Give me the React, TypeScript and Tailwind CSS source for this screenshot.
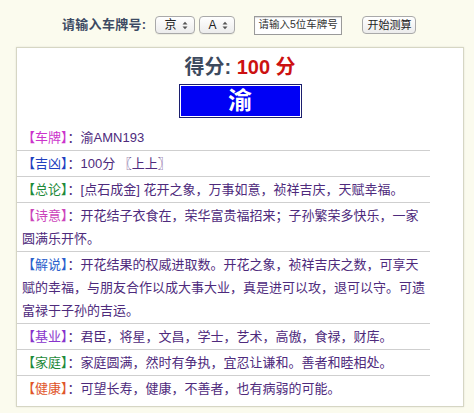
import React from 'react';

const ROWS = [
  { label: '车牌', color: 'text-[#cc33cc]', text: '渝AMN193' },
  { label: '吉凶', color: 'text-[#1f3fbf]', text: '100分 〖上上〗' },
  { label: '总论', color: 'text-[#1e8a3a]', text: '[点石成金] 花开之象，万事如意，祯祥吉庆，天赋幸福。' },
  { label: '诗意', color: 'text-[#cc44bb]', text: '开花结子衣食在，荣华富贵福招来；子孙繁荣多快乐，一家圆满乐开怀。' },
  {
    label: '解说',
    color: 'text-[#2a5fcc]',
    text: '开花结果的权威进取数。开花之象，祯祥吉庆之数，可享天赋的幸福，与朋友合作以成大事大业，真是进可以攻，退可以守。可遗富禄于子孙的吉运。',
  },
  { label: '基业', color: 'text-[#8833cc]', text: '君臣，将星，文昌，学士，艺术，高傲，食禄，财库。' },
  { label: '家庭', color: 'text-[#1e8a3a]', text: '家庭圆满，然时有争执，宜忍让谦和。善者和睦相处。' },
  { label: '健康', color: 'text-[#e0552a]', text: '可望长寿，健康，不善者，也有病弱的可能。' },
];

const Arrows = () => (
  <svg width="6" height="9" viewBox="0 0 6 9" className="text-[#555]">
    <path d="M0.5 3.5 L3 0.8 L5.5 3.5 Z M0.5 5.5 L3 8.2 L5.5 5.5 Z" fill="currentColor" />
  </svg>
);

const FakeSelect = ({ value, width }: { value: string; width: string }) => (
  <div
    className={`${width} h-[18px] flex items-center justify-between pl-[8px] pr-[6px] rounded-[4px] border border-[#a9a9a9] bg-gradient-to-b from-white to-[#ececec] text-[12px] text-[#222] shadow-[0_1px_0_rgba(0,0,0,0.05)]`}
  >
    <span>{value}</span>
    <Arrows />
  </div>
);

export default function App() {
  return (
    <div
      className="w-[474px] h-[413px] bg-[#fbfbee] overflow-hidden"
      style={{ fontFamily: '"Liberation Sans", "Noto Sans CJK SC", sans-serif' }}
    >
      {/* Top form */}
      <div className="h-[47px] flex items-center pl-[62px] pt-[3px]">
        <span className="text-[13px] font-bold text-[#3d4a63] tracking-[0.3px]">请输入车牌号:</span>
        <div className="ml-[9px] flex items-center gap-[4px]">
          <FakeSelect value="京" width="w-[40px]" />
          <FakeSelect value="A" width="w-[36px]" />
        </div>
        <div className="ml-[19px] w-[88px] h-[19px] border border-[#9a9a9a] bg-white flex items-center px-[3px] text-[10.5px] text-[#333] whitespace-nowrap overflow-hidden shadow-[inset_0_1px_1px_rgba(0,0,0,0.15)]">
          请输入5位车牌号
        </div>
        <button className="ml-[20px] w-[54px] h-[18px] rounded-[4px] border border-[#a9a9a9] bg-gradient-to-b from-white to-[#ececec] text-[11px] text-[#222] flex items-center justify-center whitespace-nowrap">
          开始测算
        </button>
      </div>

      {/* Result box */}
      <div className="ml-[16px] w-[448px] h-[360px] bg-white border border-[#d6d6c4] shadow-[0_0_2px_rgba(0,0,0,0.1)] pt-[7px]">
        <div className="text-center text-[20px] leading-[24px] font-bold">
          <span className="text-[#3d4a5e]">得分: </span>
          <span className="text-[#cc1111]">100 分</span>
        </div>
        <div className="mt-[5px] mx-auto w-[123px] h-[34px] border border-[#1c1f6e] p-px bg-white">
          <div className="w-full h-full bg-[#0000f5] flex items-center justify-center text-white text-[24px] font-bold leading-none">
            渝
          </div>
        </div>

        <div className="mt-[7px] w-[413px] text-[13px] text-[#4e2a7c]">
          {ROWS.map((r, i) => (
            <div
              key={r.label}
              className={`pl-[5px] py-px leading-[23px] ${i < ROWS.length - 1 ? 'border-b border-[#cfcfcf]' : ''}`}
            >
              <span className={r.color}>【{r.label}】</span>：{r.text}
            </div>
          ))}
        </div>
      </div>
    </div>
  );
}
